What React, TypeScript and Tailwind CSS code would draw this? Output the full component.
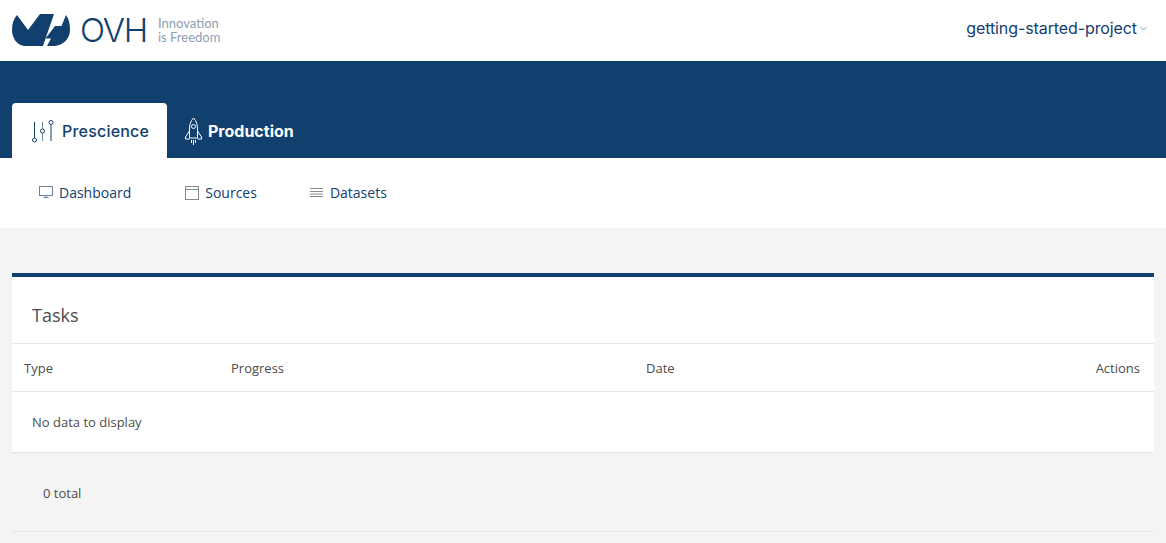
import React from 'react';

function OvhLogo() {
  return (
    <svg width="58" height="33" viewBox="0 0 58 33" className="shrink-0">
      <path d="M5 1C1.500 5 0 10 0 16C0 24 5 31 12 32L31 32L42 0L28 0L16 16Z" fill="#11406f" />
      <path d="M54 1C57 5 58 10 58 16C58 24 52 31 43 32L35 32L39 24.500L33.500 24.500L43 12L49.500 12Z" fill="#11406f" />
    </svg>
  );
}

function SlidersIcon() {
  return (
    <svg width="22" height="24" viewBox="0 0 22 24" fill="none" stroke="#11406f" strokeWidth="1" className="shrink-0">
      <path d="M2.500 3V19" />
      <circle cx="2.500" cy="21" r="2" />
      <path d="M10.500 3V10M10.500 14V22" stroke="#6f8aa5" />
      <circle cx="10.500" cy="12" r="2" />
      <path d="M19 6V22" />
      <circle cx="19" cy="3.500" r="2" />
    </svg>
  );
}

function RocketIcon() {
  return (
    <svg width="17" height="28" viewBox="0 0 17 28" fill="none" stroke="#ffffff" strokeWidth="1" className="shrink-0">
      <path d="M8.500 1C5.500 4 4.500 8 4.500 12V21H12.500V12C12.500 8 11.500 4 8.500 1Z" />
      <circle cx="8.500" cy="9.500" r="2" />
      <path d="M4.500 14L0.500 20V22H4.500M12.500 14L16.500 20V22H12.500" />
      <path d="M6.500 23V26M8.500 23V28M10.500 23V26" />
    </svg>
  );
}

function MonitorIcon() {
  return (
    <svg width="14" height="14" viewBox="0 0 14 14" fill="none" stroke="#6b8299" strokeWidth="1" className="shrink-0">
      <rect x="0.500" y="1.500" width="13" height="9" />
      <path d="M4.500 12.500H9.500M7 11V12.500" />
    </svg>
  );
}

function WindowIcon() {
  return (
    <svg width="14" height="15" viewBox="0 0 14 15" fill="none" stroke="#8a8a8a" strokeWidth="1" className="shrink-0">
      <rect x="0.500" y="1.500" width="13" height="13" />
      <path d="M0.500 4.500H13.500" />
    </svg>
  );
}

function StackIcon() {
  return (
    <svg width="13" height="11" viewBox="0 0 13 11" fill="none" stroke="#8a8a8a" strokeWidth="1" className="shrink-0">
      <path d="M0 1.500H13M0 4.500H13M0 7H13M0 9.500H13" />
    </svg>
  );
}

export default function App() {
  return (
    <div className="h-[543px] overflow-hidden bg-[#f4f4f4] font-['Open_Sans',sans-serif] text-[#4d4d4d]">
      <header className="flex h-[61px] items-center justify-between bg-white pl-3 pr-[19px]">
        <div className="flex items-center">
          <OvhLogo />
          <span className="ml-[10px] font-['Inter',sans-serif] text-[33px] font-light leading-none tracking-[-1.2px] text-[#11406f]">OVH</span>
          <div className="-mt-[2px] ml-[11px] font-['Lato',sans-serif] text-[13px] leading-[14px] text-[#8ea0b3]">
            <div>Innovation</div>
            <div>is Freedom</div>
          </div>
        </div>
        <div className="flex items-center gap-[3px] font-['Inter',sans-serif] text-[16px] tracking-[-0.1px] text-[#11406f]">
          <span className="-mt-[5px]">getting-started-project</span>
          <svg width="7" height="5" viewBox="0 0 7 5" fill="none" stroke="#8a9db0" strokeWidth="1" className="-mt-[5px]">
            <path d="M0.500 1L3.500 4L6.500 1" />
          </svg>
        </div>
      </header>

      <div className="flex h-[97px] items-end bg-[#11406f] pl-3">
        <div className="flex h-[55px] w-[155px] items-center gap-2 rounded-t-[4px] bg-white pl-5 font-['Inter',sans-serif] text-[16px] font-medium tracking-[0.2px] text-[#11406f]">
          <SlidersIcon />
          <span>Prescience</span>
        </div>
        <div className="flex h-[55px] items-center gap-[6px] pl-[18px] font-['Inter',sans-serif] text-[16px] font-bold text-white">
          <RocketIcon />
          <span>Production</span>
        </div>
      </div>

      <nav className="flex h-[70px] items-center bg-white pb-[2px] pl-[39px] text-[14px] text-[#11406f]">
        <div className="flex items-center gap-[6px]">
          <MonitorIcon />
          <span>Dashboard</span>
        </div>
        <div className="ml-[54px] flex items-center gap-[6px]">
          <WindowIcon />
          <span>Sources</span>
        </div>
        <div className="ml-[53px] flex items-center gap-[7px]">
          <StackIcon />
          <span>Datasets</span>
        </div>
      </nav>

      <section className="mx-3 mt-[45px] border-t-4 border-[#11406f] bg-white">
        <h2 className="flex h-[67px] items-center border-b border-[#e6e6e6] pl-5 pt-[10px] text-[18px] text-[#4d4d4d]">Tasks</h2>
        <div className="grid h-[48px] grid-cols-[207px_415px_1fr_auto] items-center border-b border-[#e6e6e6] pl-3 pr-[14px] pt-[2px] text-[13px]">
          <span>Type</span>
          <span>Progress</span>
          <span>Date</span>
          <span>Actions</span>
        </div>
        <div className="flex h-[61px] items-center border-b border-[#e6e6e6] pl-5 pt-[2px] text-[13px]">No data to display</div>
      </section>
      <div className="mx-3 flex h-[79px] items-center border-b border-[#e6e6e6] pl-[31px] pt-[3px] text-[13px]">0 total</div>
    </div>
  );
}
